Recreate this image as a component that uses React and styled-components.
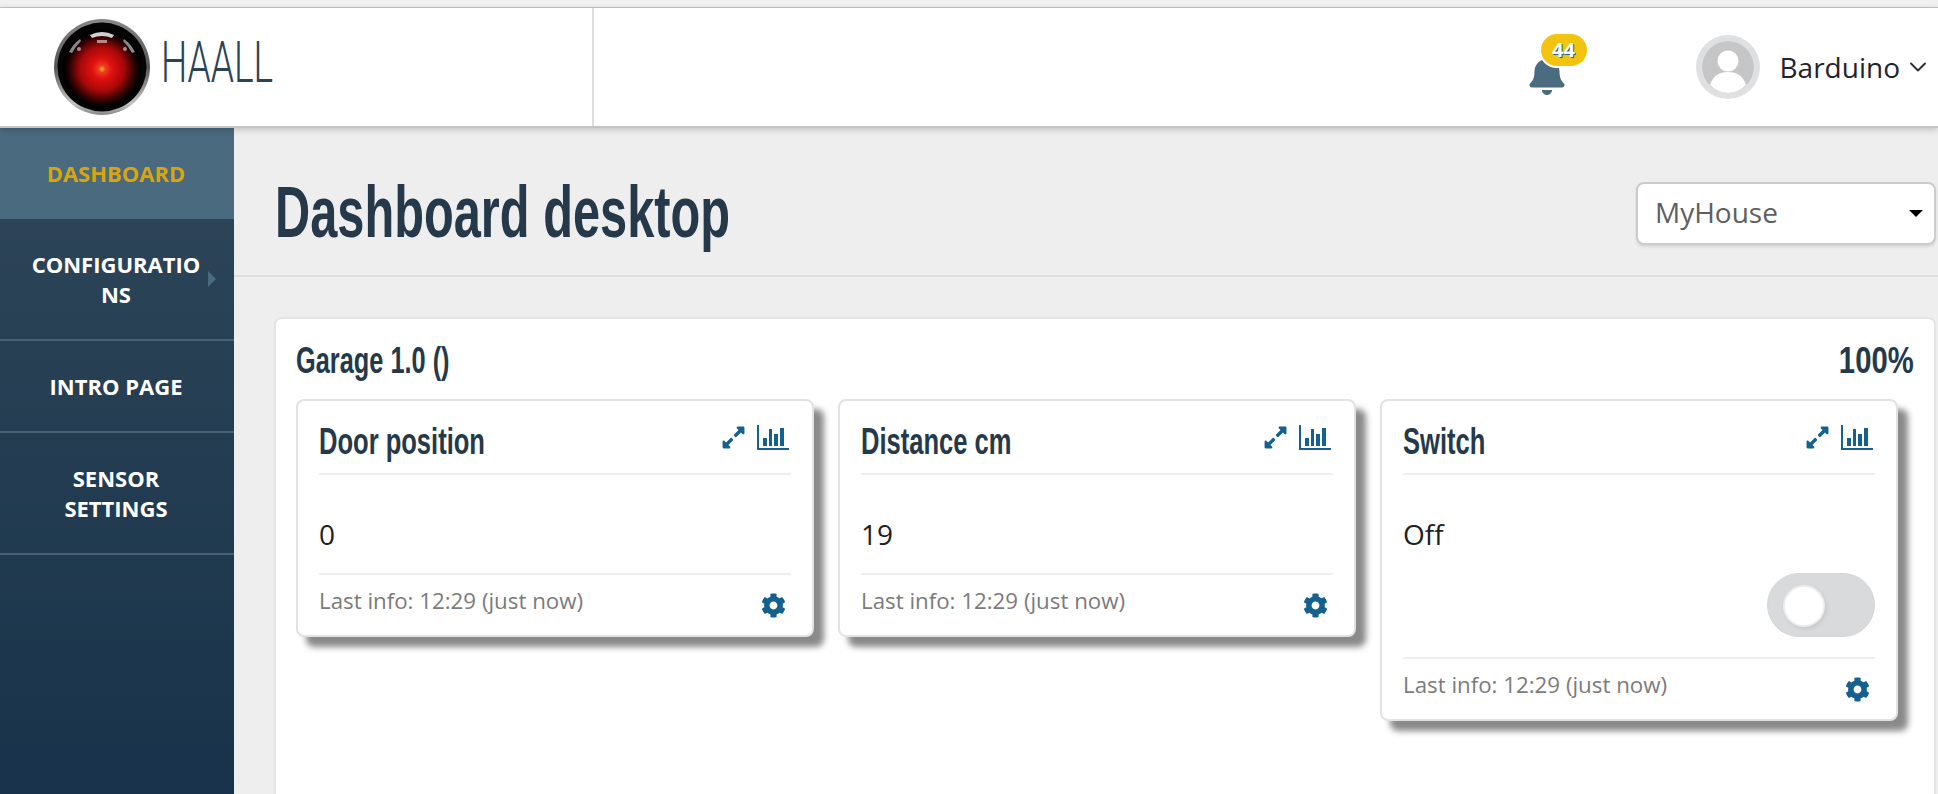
import React from "react";
import styled, { createGlobalStyle } from "styled-components";
import { FaBell, FaCog, FaExpandAlt } from "react-icons/fa";
import { ChevronDown } from "lucide-react";

const heading = `"Liberation Sans", sans-serif`;
const body = `"Open Sans", "Liberation Sans", sans-serif`;

const GlobalStyle = createGlobalStyle`
  html, body {
    margin: 0;
    padding: 0;
    height: 794px;
    overflow: hidden;
    background: #f0f0f0;
    font-family: ${body};
  }
  * {
    box-sizing: border-box;
  }
`;

const sensors = [
  { title: "Door position", value: "0" },
  { title: "Distance cm", value: "19" },
  { title: "Switch", value: "Off", toggle: true },
];

//Logo of the red eye
function EyeLogo() {
  return (
    <svg width="96" height="96" viewBox="0 0 96 96">
      <defs>
        <radialGradient id="eye" cx="50%" cy="50%" r="50%">
          <stop offset="0%" stopColor="#ffd23a" />
          <stop offset="8%" stopColor="#f04020" />
          <stop offset="25%" stopColor="#e01010" />
          <stop offset="55%" stopColor="#a80808" />
          <stop offset="80%" stopColor="#300202" />
          <stop offset="95%" stopColor="#000" />
        </radialGradient>
        <linearGradient id="ring" x1="0" y1="0" x2="0" y2="1">
          <stop offset="0%" stopColor="#888" />
          <stop offset="50%" stopColor="#555" />
          <stop offset="88%" stopColor="#c4c4c4" />
          <stop offset="100%" stopColor="#888" />
        </linearGradient>
      </defs>
      <circle cx="48" cy="48" r="48" fill="url(#ring)" />
      <circle cx="48" cy="48" r="44.5" fill="#050505" />
      <circle cx="48" cy="50" r="40" fill="url(#eye)" />
      <path d="M36 16 Q48 10 60 16 L58 19 Q48 15 38 19 Z" fill="#cfcfcf" />
      <path d="M15 33 Q19 25 26 20 L27 22 Q21 28 18 34 Z" fill="#888" />
      <path d="M81 33 Q77 25 70 20 L69 22 Q75 28 78 34 Z" fill="#888" />
      <rect x="43" y="21" width="10" height="3" fill="#b88" />
      <circle cx="25" cy="30" r="2" fill="#a88" />
      <circle cx="71" cy="30" r="2" fill="#a88" />
    </svg>
  );
}

//Old style bar chart icon, axis and four bars
function ChartIcon() {
  return (
    <svg width="32" height="25" viewBox="0 0 32 25" fill="#14608f">
      <rect x="0" y="0" width="2" height="25" />
      <rect x="0" y="23" width="32" height="2" />
      <rect x="6" y="13" width="4" height="8" />
      <rect x="12" y="4" width="3" height="17" />
      <rect x="17" y="9" width="4" height="12" />
      <rect x="23" y="3" width="4" height="18" />
    </svg>
  );
}

function UserAvatar() {
  return (
    <Avatar>
      <svg width="52" height="52" viewBox="0 0 52 52">
        <circle cx="26" cy="26" r="26" fill="#c6c6c6" />
        <circle cx="26" cy="20" r="10.5" fill="#fff" />
        <path d="M8 44 Q12 31 26 31 Q40 31 44 44 Q36 52 26 52 Q16 52 8 44 Z" fill="#fff" />
      </svg>
    </Avatar>
  );
}

function SensorCard({ title, value, toggle }) {
  return (
    <Card>
      <CardHead>
        <CardTitle>{title}</CardTitle>
        <CardIcons>
          <FaExpandAlt size={25} />
          <ChartIcon />
        </CardIcons>
      </CardHead>
      <CardValue>{value}</CardValue>
      {toggle && (
        <ToggleRow>
          <Toggle>
            <Knob />
          </Toggle>
        </ToggleRow>
      )}
      <CardFoot>
        <span>Last info: 12:29 (just now)</span>
        <FaCog size={25} />
      </CardFoot>
    </Card>
  );
}

function App() {
  return (
    <>
      <GlobalStyle />
      <Page>
        <TopBar>
          <Brand>
            <EyeLogo />
            <BrandName>HAALL</BrandName>
          </Brand>
          <TopRight>
            <BellBox>
              <FaBell size={40} />
              <Badge>44</Badge>
            </BellBox>
            <UserAvatar />
            <UserName>Barduino</UserName>
            <ChevronDown size={28} strokeWidth={1.6} color="#2b2b35" />
          </TopRight>
        </TopBar>
        <Body>
          <Sidebar>
            <NavItem $active>Dashboard</NavItem>
            <NavItem>
              Configurations
              <NavArrow />
            </NavItem>
            <NavItem>Intro page</NavItem>
            <NavItem>Sensor settings</NavItem>
          </Sidebar>
          <Main>
            <PageHead>
              <PageTitle>Dashboard desktop</PageTitle>
              <HouseSelect>
                MyHouse
                <SelectArrow />
              </HouseSelect>
            </PageHead>
            <Panel>
              <PanelHead>
                <PanelTitle>Garage 1.0 ()</PanelTitle>
                <PanelPercent>100%</PanelPercent>
              </PanelHead>
              <CardGrid>
                {sensors.map((s) => (
                  <SensorCard key={s.title} {...s} />
                ))}
              </CardGrid>
            </Panel>
          </Main>
        </Body>
      </Page>
    </>
  );
}

const Page = styled.div`
  height: 794px;
  display: flex;
  flex-direction: column;
  padding-top: 7px;
  overflow: hidden;
`;

const TopBar = styled.header`
  flex: 0 0 121px;
  display: flex;
  justify-content: space-between;
  background: #fff;
  border-top: 1px solid #bdbdbd;
  border-bottom: 2px solid #c4c4c4;
  box-shadow: 0 2px 6px rgba(0, 0, 0, 0.18);
  position: relative;
  z-index: 2;
`;

const Brand = styled.div`
  width: 594px;
  display: flex;
  align-items: center;
  gap: 11px;
  padding-left: 54px;
  border-right: 2px solid #dcdfe2;
`;

/* no condensed font here, so the headings are squeezed */
const BrandName = styled.div`
  margin-bottom: 10px;
  font-family: Roboto, ${heading};
  font-size: 58px;
  font-weight: 300;
  color: #2c4255;
  transform: scaleX(0.64);
  transform-origin: left center;
`;

const TopRight = styled.div`
  display: flex;
  align-items: center;
  padding-right: 6px;
`;

const BellBox = styled.div`
  position: relative;
  width: 35px;
  height: 40px;
  margin: 16px 134px 0 0;
  color: #4b6b80;
`;

const Badge = styled.div`
  position: absolute;
  left: 12px;
  top: -23px;
  width: 50px;
  height: 36px;
  border: 2px solid #fff;
  border-radius: 18px;
  background: #f2c40f;
  color: #fff;
  font-size: 20px;
  font-weight: 700;
  line-height: 31px;
  text-align: center;
  text-shadow: 1px 1px 0 #2b5f8f;
`;

const Avatar = styled.div`
  width: 64px;
  height: 64px;
  border-radius: 50%;
  background: #dfe0e2;
  display: flex;
  align-items: center;
  justify-content: center;
  overflow: hidden;
  svg {
    border-radius: 50%;
  }
`;

const UserName = styled.div`
  margin: 0 4px 0 20px;
  font-size: 28px;
  color: #23232d;
`;

const Body = styled.div`
  flex: 1;
  display: flex;
  min-height: 0;
`;

const Sidebar = styled.nav`
  flex: 0 0 234px;
  background: linear-gradient(#304759, #17324a);
`;

const NavItem = styled.div`
  position: relative;
  padding: ${(p) => (p.$active ? "30px 32px 31px 30px" : "30px 32px 30px 30px")};
  background: ${(p) => (p.$active ? "#4a6a7f" : "transparent")};
  border-bottom: ${(p) => (p.$active ? "none" : "2px solid #486274")};
  color: ${(p) => (p.$active ? "#d9a50f" : "#fff")};
  font-size: 22px;
  font-weight: 700;
  line-height: 30px;
  text-align: center;
  text-transform: uppercase;
  word-break: break-word;
`;

const NavArrow = styled.span`
  position: absolute;
  left: 208px;
  top: 52px;
  border-left: 8px solid #4a6a7f;
  border-top: 8px solid transparent;
  border-bottom: 8px solid transparent;
`;

const Main = styled.main`
  flex: 1;
  min-width: 0;
  background: #eee;
  display: flex;
  flex-direction: column;
`;

const PageHead = styled.div`
  height: 149px;
  flex: none;
  display: flex;
  align-items: center;
  justify-content: space-between;
  padding: 24px 2px 0 41px;
  border-bottom: 2px solid #e0e0e0;
`;

const PageTitle = styled.h1`
  margin: 0 0 4px;
  font-family: ${heading};
  font-size: 72px;
  font-weight: 700;
  line-height: 80px;
  color: #25394a;
  transform: scaleX(0.677);
  transform-origin: left center;
`;

const HouseSelect = styled.div`
  position: relative;
  flex: none;
  width: 300px;
  height: 63px;
  padding-left: 17px;
  background: #fff;
  border: 2px solid #ccc;
  border-radius: 8px;
  box-shadow: 0 2px 3px rgba(0, 0, 0, 0.1);
  color: #5f5f5f;
  font-size: 28px;
  line-height: 57px;
`;

const SelectArrow = styled.span`
  position: absolute;
  right: 11px;
  top: 26px;
  border-top: 7px solid #000;
  border-left: 7px solid transparent;
  border-right: 7px solid transparent;
`;

const Panel = styled.section`
  flex: 1;
  margin: 40px 2px 0 40px;
  padding: 0 20px;
  background: #fff;
  border: 2px solid #e4e4e4;
  border-bottom: none;
  border-radius: 8px 8px 0 0;
`;

const PanelHead = styled.div`
  height: 80px;
  display: flex;
  align-items: center;
  justify-content: space-between;
`;

const PanelTitle = styled.h3`
  margin: 3px 0 0;
  font-family: ${heading};
  font-size: 37px;
  font-weight: 700;
  color: #25394a;
  transform: scaleX(0.685);
  transform-origin: left center;
`;

const PanelPercent = styled(PanelTitle)`
  transform: scaleX(0.79);
  transform-origin: right center;
`;

const CardGrid = styled.div`
  display: grid;
  grid-template-columns: repeat(3, 518px);
  column-gap: 24px;
  align-items: start;
`;

const Card = styled.article`
  padding: 0 21px;
  background: #fff;
  border: 2px solid #e2e2e2;
  border-radius: 8px;
  box-shadow: 10px 10px 6px #8a8a8a;
`;

const CardHead = styled.div`
  height: 74px;
  display: flex;
  align-items: center;
  justify-content: space-between;
  padding-right: 2px;
  border-bottom: 2px solid #eee;
`;

const CardTitle = styled.h4`
  margin: 10px 0 0;
  font-family: ${heading};
  font-size: 37px;
  font-weight: 700;
  color: #25394a;
  transform: scaleX(0.69);
  transform-origin: left center;
`;

const CardIcons = styled.div`
  display: flex;
  align-items: center;
  gap: 11px;
  color: #14608f;
`;

const CardValue = styled.div`
  padding: 41px 0 21px;
  color: #1f1f1f;
  font-size: 28px;
  line-height: 36px;
`;

const ToggleRow = styled.div`
  display: flex;
  justify-content: flex-end;
  margin-bottom: 20px;
`;

const Toggle = styled.div`
  width: 108px;
  height: 64px;
  padding: 11px 0 0 15px;
  border: 1px solid #d3d5d7;
  border-radius: 32px;
  background: #d9dadc;
`;

const Knob = styled.div`
  width: 42px;
  height: 42px;
  border: 2px solid #eee;
  border-radius: 50%;
  background: #fff;
  box-shadow: 2px 2px 4px rgba(0, 0, 0, 0.08);
`;

const CardFoot = styled.div`
  height: 62px;
  display: flex;
  align-items: center;
  justify-content: space-between;
  padding-right: 5px;
  border-top: 2px solid #eee;
  color: #7b7b7b;
  font-size: 22.3px;
  svg {
    margin-top: 1px;
    color: #14608f;
  }
  span {
    margin-bottom: 9px;
  }
`;

export default App;
